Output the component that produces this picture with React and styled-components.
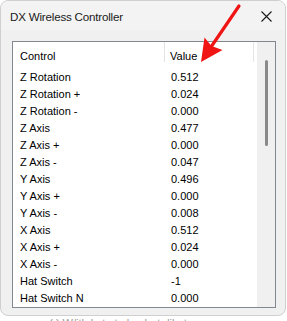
import React from 'react';
import styled, {createGlobalStyle} from 'styled-components';

const GlobalStyle = createGlobalStyle`
    html, body {
        margin: 0;
        padding: 0;
        background: #ffffff;
        overflow: hidden;
    }
`
const Page = styled.div`
    position: relative;
    width: 287px;
    height: 321px;
    font-family: "Liberation Sans", Arial, sans-serif;
`
const Window = styled.div`
    box-sizing: border-box;
    width: 286px;
    height: 316px;
    border: 1px solid #cfcfcf;
    border-radius: 8px;
    background: #f0f0f0;
    display: flex;
    flex-direction: column;
    overflow: hidden;
`
const TitleBar = styled.div`
    height: 30px;
    display: flex;
    align-items: center;
    justify-content: space-between;
    padding: 0 9px 0 9px;
    background: #f3f3f3;
`
const Title = styled.span`
    font-size: 11.6px;
    letter-spacing: -0.2px;
    color: #1a1a1a;
    margin-top: 1px;
`
const Close = styled.div`
    width: 11px;
    height: 11px;
    margin-right: 4px;
    margin-top: 1px;
    display: flex;
`
const Body = styled.div`
    flex: 1;
    padding: 11px 9px 7px 11px;
    display: flex;
`
const ListBox = styled.div`
    box-sizing: border-box;
    flex: 1;
    height: 267px;
    border: 1px solid #828790;
    background: #ffffff;
    display: flex;
    overflow: hidden;
`
const Table = styled.div`
    flex: 1;
    display: flex;
    flex-direction: column;
`
const Header = styled.div`
    display: grid;
    grid-template-columns: 152px 89px 1fr;
    height: 26px;
    align-items: start;
    font-size: 11px;
    color: #000;
`
const HeadCell = styled.div`
    height: 20px;
    padding-top: 7px;
    box-sizing: border-box;
    display: flex;
    align-items: center;
    padding-left: ${p => p.pad}px;
    border-right: ${p => p.last ? 'none' : '1px solid #e5e5e5'};
`
const Row = styled.div`
    display: grid;
    grid-template-columns: 152px 1fr;
    height: 17px;
    align-items: center;
    font-size: 11px;
    color: #000;
`
const Cell = styled.div`
    padding-left: ${p => p.pad}px;
    white-space: nowrap;
`
const Scrollbar = styled.div`
    width: 18px;
    background: #f0f0f0;
    display: flex;
    justify-content: center;
    padding-top: 18px;
`
const Thumb = styled.div`
    width: 3px;
    height: 86px;
    border-radius: 2px;
    background: #8a8a8a;
`
const BehindText = styled.div`
    padding: 1px 0 0 40px;
    font-size: 11px;
    color: #9a9a9a;
    white-space: nowrap;
`
const Arrow = styled.svg`
    position: absolute;
    left: 0;
    top: 0;
    pointer-events: none;
`

const rows = [
    ['Z Rotation', '0.512'],
    ['Z Rotation +', '0.024'],
    ['Z Rotation -', '0.000'],
    ['Z Axis', '0.477'],
    ['Z Axis +', '0.000'],
    ['Z Axis -', '0.047'],
    ['Y Axis', '0.496'],
    ['Y Axis +', '0.000'],
    ['Y Axis -', '0.008'],
    ['X Axis', '0.512'],
    ['X Axis +', '0.024'],
    ['X Axis -', '0.000'],
    ['Hat Switch', '-1'],
    ['Hat Switch N', '0.000'],
]

export default function App(){
    return(
        <Page>
            <GlobalStyle/>
            <Window>
                <TitleBar>
                    <Title>DX Wireless Controller</Title>
                    <Close>
                        <svg width="11" height="11" viewBox="0 0 11 11">
                            <path d="M0.5 0.5 L10.5 10.5 M10.5 0.5 L0.5 10.5" stroke="#1a1a1a" strokeWidth="1.1" fill="none"/>
                        </svg>
                    </Close>
                </TitleBar>
                <Body>
                    <ListBox>
                        <Table>
                            <Header>
                                <HeadCell pad={7}>Control</HeadCell>
                                <HeadCell pad={5}>Value</HeadCell>
                                <HeadCell last/>
                            </Header>
                            {rows.map(([name, val]) => (
                                <Row key={name}>
                                    <Cell pad={7}>{name}</Cell>
                                    <Cell pad={6}>{val}</Cell>
                                </Row>
                            ))}
                        </Table>
                        <Scrollbar><Thumb/></Scrollbar>
                    </ListBox>
                </Body>
            </Window>
            <BehindText>a ( ) W/ith la ta ta la oh rt dila ta a</BehindText>
            <Arrow width="287" height="321" viewBox="0 0 287 321">
                <path d="M239 6 L211 47" stroke="#f01414" strokeWidth="3.2" strokeLinecap="round"/>
                <polygon points="201,62 204.5,37.5 211.5,46 222.5,50" fill="#f01414"/>
            </Arrow>
        </Page>
    )
}
